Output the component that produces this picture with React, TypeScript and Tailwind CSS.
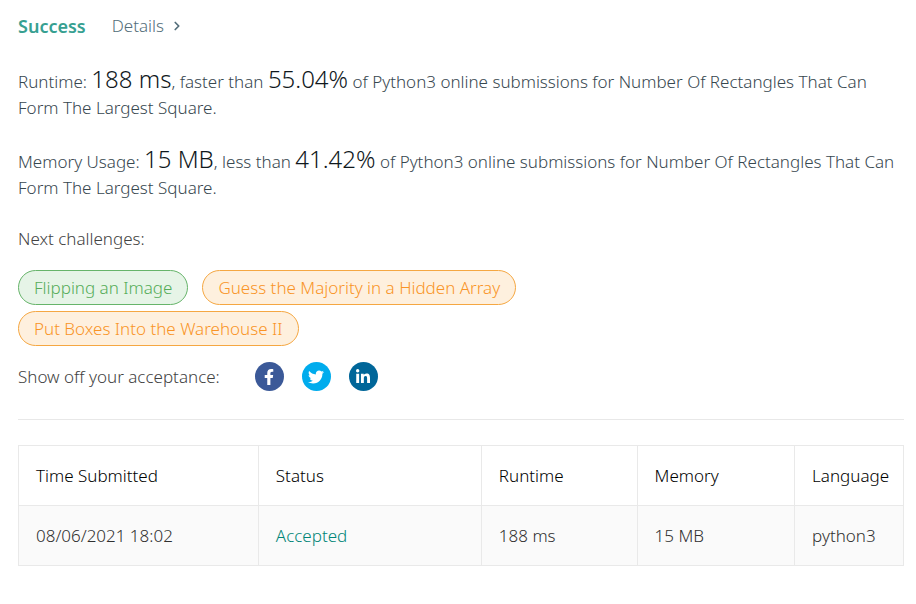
import { ChevronRight } from "lucide-react";
import { FaFacebookF, FaTwitter, FaLinkedinIn } from "react-icons/fa";

const challenges = [
  { title: "Flipping an Image", tone: "border-[#66b46a] bg-[#e6f4e7] text-[#55ac59]" },
  { title: "Guess the Majority in a Hidden Array", tone: "border-[#f5a742] bg-[#fef0de] text-[#f99426]" },
  { title: "Put Boxes Into the Warehouse II", tone: "border-[#f5a742] bg-[#fef0de] text-[#f99426]" },
];

const shares = [
  { name: "Facebook", tone: "bg-[#3b5998]", Icon: FaFacebookF },
  { name: "Twitter", tone: "bg-[#00aced]", Icon: FaTwitter },
  { name: "LinkedIn", tone: "bg-[#006699]", Icon: FaLinkedinIn },
];

const columns = [
  { label: "Time Submitted", width: "w-[27.1%]" },
  { label: "Status", width: "w-[25.2%]" },
  { label: "Runtime", width: "w-[17.6%]" },
  { label: "Memory", width: "w-[17.8%]" },
  { label: "Language", width: "w-[12.3%]" },
];

function Stat({ label, value, comparison, percent }: { label: string; value: string; comparison: string; percent: string }) {
  return (
    <p className="text-[#37474f]">
      {`${label}: `}
      <span className="text-2xl leading-5 text-[#10181c]">{value}</span>
      {`, ${comparison} `}
      <span className="text-2xl leading-5 text-[#10181c]">{percent}</span>
      {" of Python3 online submissions for Number Of Rectangles That Can Form The Largest Square."}
    </p>
  );
}

export default function App() {
  return (
    <main className="bg-white pt-[13px] pr-3 pb-9 pl-[18px] font-['Noto_Sans','Open_Sans',sans-serif] text-[17px] leading-[26px] font-light text-[#424242]">
      <header className="flex items-center gap-[26px]">
        <h1 className="text-lg leading-[26px] font-semibold text-[#37a091]">Success</h1>
        <a href="#details" className="flex items-center gap-1.5 text-[#546e7a]">
          Details
          <ChevronRight className="size-3.5" strokeWidth={3} aria-hidden="true" />
        </a>
      </header>

      <section className="mt-[30px] flex flex-col gap-7">
        <Stat label="Runtime" value="188 ms" comparison="faster than" percent="55.04%" />
        <Stat label="Memory Usage" value="15 MB" comparison="less than" percent="41.42%" />
      </section>

      <section className="mt-[25px]">
        <h2>Next challenges:</h2>
        <ul className="mt-[18px] flex w-4/5 flex-wrap gap-x-3.5 gap-y-1.5">
          {challenges.map(({ title, tone }) => (
            <li key={title}>
              <a href="#challenge" className={`flex h-[35px] items-center rounded-full border px-[15px] ${tone}`}>
                {title}
              </a>
            </li>
          ))}
        </ul>
      </section>

      <section className="mt-4 flex h-[29px] items-center gap-[35px]">
        <span>Show off your acceptance:</span>
        <div className="flex gap-[18px]">
          {shares.map(({ name, tone, Icon }) => (
            <button key={name} type="button" aria-label={name} className={`flex size-[29px] items-center justify-center rounded-full text-white ${tone}`}>
              <Icon className="size-4" aria-hidden="true" />
            </button>
          ))}
        </div>
      </section>

      <hr className="mt-7 border-[#e8e8e8]" />

      <table className="mt-[25px] w-full table-fixed border-collapse text-left">
        <thead>
          <tr className="h-[60px] text-black">
            {columns.map(({ label, width }) => (
              <th key={label} scope="col" className={`border border-[#e9e9e9] pr-3 pl-[17px] font-light ${width}`}>
                {label}
              </th>
            ))}
          </tr>
        </thead>
        <tbody>
          <tr className="h-[60px] bg-[#fafafa] text-[#303030]">
            <td className="border border-[#e9e9e9] pr-3 pl-[17px]">08/06/2021 18:02</td>
            <td className="border border-[#e9e9e9] pr-3 pl-[17px]">
              <a href="#submission" className="text-[#008577]">Accepted</a>
            </td>
            <td className="border border-[#e9e9e9] pr-3 pl-[17px]">188 ms</td>
            <td className="border border-[#e9e9e9] pr-3 pl-[17px]">15 MB</td>
            <td className="border border-[#e9e9e9] pr-3 pl-[17px]">python3</td>
          </tr>
        </tbody>
      </table>
    </main>
  );
}
